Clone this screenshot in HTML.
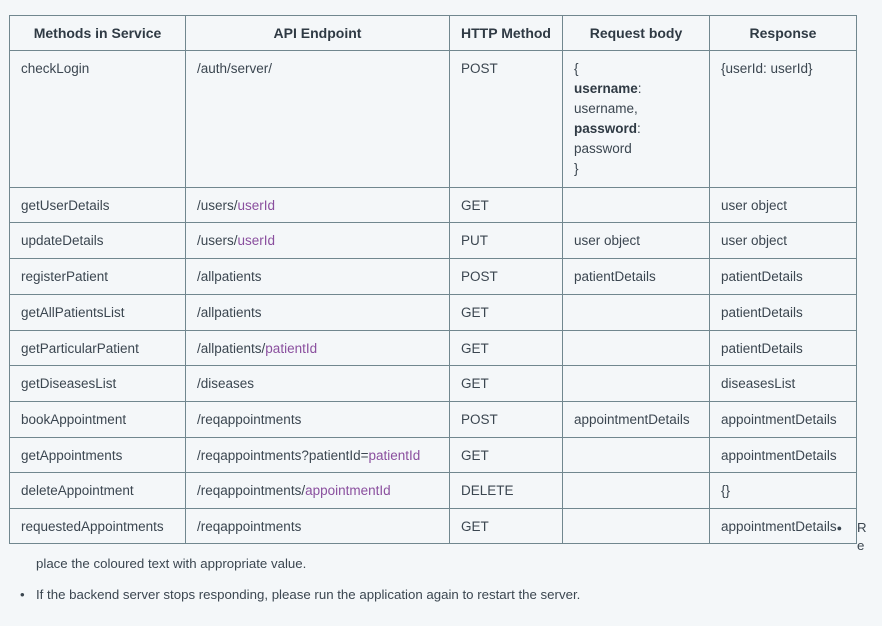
<!DOCTYPE html>
<html><head><meta charset="utf-8"><style>
body{margin:0;background:#f4f7f9;width:882px;height:626px;overflow:hidden;font-family:"Liberation Sans",sans-serif;color:#3b4650;font-size:13.5px;position:relative}
table{position:absolute;left:9px;top:15px;border-collapse:collapse;table-layout:fixed}
td,th{border:1px solid #71878f;padding:0 0 0 11px;vertical-align:top;line-height:20px}
th{text-align:center;font-weight:bold;padding:0;vertical-align:middle;color:#2f3a44;height:34px;font-size:14px}
td{padding-top:8px}
.p{color:#8a4f9e}
b{color:#2f3a44}
.t{position:absolute;font-size:13.25px;line-height:16px}
</style></head><body>
<table>
<colgroup><col style="width:176px"><col style="width:264px"><col style="width:113px"><col style="width:147px"><col style="width:147px"></colgroup>
<tr><th>Methods in Service</th><th>API Endpoint</th><th>HTTP Method</th><th>Request body</th><th>Response</th></tr>
<tr style="height:137px"><td>checkLogin</td><td>/auth/server/</td><td>POST</td><td>{<br><b>username</b>:<br>username,<br><b>password</b>:<br>password<br>}</td><td>{userId: userId}</td></tr>
<tr style="height:35px"><td>getUserDetails</td><td>/users/<span class="p">userId</span></td><td>GET</td><td></td><td>user object</td></tr>
<tr style="height:36px"><td>updateDetails</td><td>/users/<span class="p">userId</span></td><td>PUT</td><td>user object</td><td>user object</td></tr>
<tr style="height:36px"><td>registerPatient</td><td>/allpatients</td><td>POST</td><td>patientDetails</td><td>patientDetails</td></tr>
<tr style="height:36px"><td>getAllPatientsList</td><td>/allpatients</td><td>GET</td><td></td><td>patientDetails</td></tr>
<tr style="height:35px"><td>getParticularPatient</td><td>/allpatients/<span class="p">patientId</span></td><td>GET</td><td></td><td>patientDetails</td></tr>
<tr style="height:36px"><td>getDiseasesList</td><td>/diseases</td><td>GET</td><td></td><td>diseasesList</td></tr>
<tr style="height:36px"><td>bookAppointment</td><td>/reqappointments</td><td>POST</td><td>appointmentDetails</td><td>appointmentDetails</td></tr>
<tr style="height:35px"><td>getAppointments</td><td>/reqappointments?patientId=<span class="p">patientId</span></td><td>GET</td><td></td><td>appointmentDetails</td></tr>
<tr style="height:36px"><td>deleteAppointment</td><td>/reqappointments/<span class="p">appointmentId</span></td><td>DELETE</td><td></td><td>{}</td></tr>
<tr style="height:35px"><td>requestedAppointments</td><td>/reqappointments</td><td>GET</td><td></td><td>appointmentDetails<span style="font-size:9px">&#9679;</span></td></tr>
</table>
<div class="t" style="left:857px;top:519px;line-height:18px">R<br>e</div>
<div class="t" style="left:36px;top:556px">place the coloured text with appropriate value.</div>
<div class="t" style="left:20px;top:587px">&bull;</div>
<div class="t" style="left:36px;top:587px">If the backend server stops responding, please run the application again to restart the server.</div>
</body></html>
